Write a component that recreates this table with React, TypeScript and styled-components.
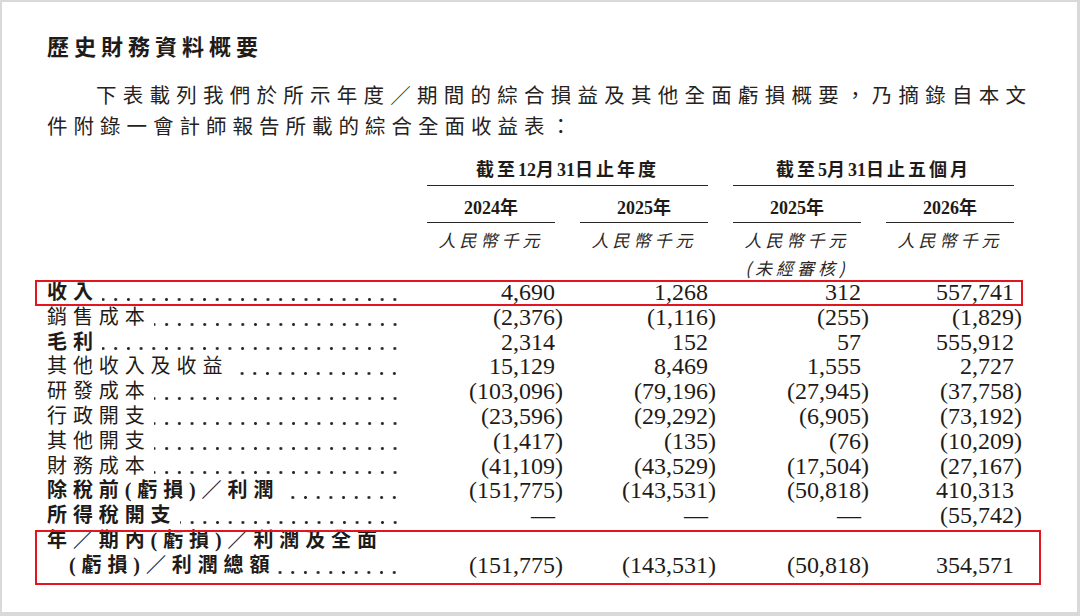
import React from 'react';
import styled, { createGlobalStyle, css } from 'styled-components';

const GlobalStyle = createGlobalStyle`
  html, body { margin: 0; padding: 0; background: #d9d9d9; }
  body { width: 1080px; height: 616px; overflow: hidden; }
`;

const Page = styled.main`
  box-sizing: border-box;
  margin: 2px 3px 0 2px;
  width: 1075px;
  height: 610px;
  background: #ffffff;
  padding: 29px 0 0 45px;
  color: #1e1b18;
  font-family: "Liberation Serif", "Noto Sans CJK TC", serif;
`;

const Title = styled.h1`
  margin: 0;
  font-family: "Noto Sans CJK TC", sans-serif;
  font-size: 22px;
  font-weight: 700;
  letter-spacing: 5px;
  line-height: 28px;
`;

const Intro = styled.p`
  margin: 19.5px 0 0;
  width: 985px;
  font-family: "Noto Sans CJK TC", sans-serif;
  font-size: 20.5px;
  letter-spacing: 6px;
  line-height: 31px;
  text-indent: 49px;
  text-align: justify;
  color: #262220;
`;

const Table = styled.section`
  margin-top: 17.5px;
  display: flex;
  flex-direction: column;
  align-items: flex-start;
`;

const gridCols = css`
  display: grid;
  grid-template-columns: 355px repeat(4, 128px);
  column-gap: 25px;
`;

const HeadRow = styled.div<{ $padTop: number }>`
  ${gridCols};
  padding-top: ${p => p.$padTop}px;
`;

const GroupHead = styled.div<{ $col: number }>`
  grid-column: ${p => p.$col} / span 2;
  text-align: center;
  font-size: 18px;
  font-weight: 700;
  line-height: 24px;
  letter-spacing: 3px;
  padding-bottom: 3px;
  border-bottom: 1px solid #2a2624;
`;

const Digits = styled.span`
  letter-spacing: 0;
`;

const YearHead = styled.div<{ $col: number }>`
  grid-column: ${p => p.$col};
  text-align: center;
  font-size: 18px;
  font-weight: 700;
  line-height: 24px;
  padding-bottom: 2px;
  border-bottom: 1px solid #2a2624;
`;

const UnitCell = styled.div<{ $col: number }>`
  grid-column: ${p => p.$col};
  text-align: center;
  font-family: "Noto Sans CJK TC", sans-serif;
  font-size: 17px;
  font-style: italic;
  letter-spacing: 4px;
  line-height: 24px;
  color: #2b2725;
`;

const Row = styled.div`
  ${gridCols};
  height: 24.8px;
  line-height: 24.8px;
  align-items: center;
`;

const LabelCell = styled.div<{ $bold?: boolean; $indent?: number }>`
  align-self: stretch;
  display: flex;
  align-items: baseline;
  min-width: 0;
  white-space: nowrap;
  font-size: 20px;
  letter-spacing: 5.9px;
  font-weight: ${p => (p.$bold ? 700 : 400)};
  padding-left: ${p => p.$indent ?? 0}px;
`;

const Leader = styled.span`
  flex: 1;
  align-self: stretch;
  margin-left: 3px;
  background-image: radial-gradient(circle, #2a2624 0 1.2px, transparent 1.7px);
  background-size: 12.7px 5px;
  background-repeat: repeat-x;
  background-position: right 1px bottom 3px;
`;

const Num = styled.div`
  text-align: right;
  font-size: 24px;
  white-space: nowrap;
`;

const Close = styled.span`
  margin-right: -8px;
`;

const Marked = styled.div<{ $t: number; $r: number; $b: number; $l: number }>`
  position: relative;
  width: max-content;
  &::after {
    content: '';
    position: absolute;
    top: ${p => p.$t}px;
    right: ${p => p.$r}px;
    bottom: ${p => p.$b}px;
    left: ${p => p.$l}px;
    border: 2px solid #e3151f;
    pointer-events: none;
  }
`;

type Line = { label: string; bold?: boolean; values: string[] };

const lines: Line[] = [
  { label: '銷售成本', values: ['(2,376)', '(1,116)', '(255)', '(1,829)'] },
  { label: '毛利', bold: true, values: ['2,314', '152', '57', '555,912'] },
  { label: '其他收入及收益', values: ['15,129', '8,469', '1,555', '2,727'] },
  { label: '研發成本', values: ['(103,096)', '(79,196)', '(27,945)', '(37,758)'] },
  { label: '行政開支', values: ['(23,596)', '(29,292)', '(6,905)', '(73,192)'] },
  { label: '其他開支', values: ['(1,417)', '(135)', '(76)', '(10,209)'] },
  { label: '財務成本', values: ['(41,109)', '(43,529)', '(17,504)', '(27,167)'] },
  { label: '除稅前(虧損)／利潤', bold: true, values: ['(151,775)', '(143,531)', '(50,818)', '410,313'] },
  { label: '所得稅開支', bold: true, values: ['—', '—', '—', '(55,742)'] },
];

const Value: React.FC<{ v: string }> = ({ v }) =>
  v.endsWith(')') ? (
    <Num>
      {v.slice(0, -1)}
      <Close>)</Close>
    </Num>
  ) : (
    <Num>{v}</Num>
  );

const DataRow: React.FC<Line & { indent?: number }> = ({ label, bold, values, indent }) => (
  <Row>
    <LabelCell $bold={bold} $indent={indent}>
      <span>{label}</span>
      <Leader />
    </LabelCell>
    {values.map((v, i) => (
      <Value key={i} v={v} />
    ))}
  </Row>
);

export default function App() {
  return (
    <>
      <GlobalStyle />
      <Page>
        <Title>歷史財務資料概要</Title>
        <Intro>
          下表載列我們於所示年度／期間的綜合損益及其他全面虧損概要，乃摘錄自本文件附錄一會計師報告所載的綜合全面收益表：
        </Intro>
        <Table>
          <HeadRow $padTop={0}>
            <GroupHead $col={2}>
              截至<Digits>12</Digits>月<Digits>31</Digits>日止年度
            </GroupHead>
            <GroupHead $col={4}>
              截至<Digits>5</Digits>月<Digits>31</Digits>日止五個月
            </GroupHead>
          </HeadRow>
          <HeadRow $padTop={10}>
            <YearHead $col={2}>2024年</YearHead>
            <YearHead $col={3}>2025年</YearHead>
            <YearHead $col={4}>2025年</YearHead>
            <YearHead $col={5}>2026年</YearHead>
          </HeadRow>
          <HeadRow $padTop={5}>
            <UnitCell $col={2}>人民幣千元</UnitCell>
            <UnitCell $col={3}>人民幣千元</UnitCell>
            <UnitCell $col={4}>人民幣千元</UnitCell>
            <UnitCell $col={5}>人民幣千元</UnitCell>
          </HeadRow>
          <HeadRow $padTop={4}>
            <UnitCell $col={4}>(未經審核)</UnitCell>
          </HeadRow>
          <Marked $t={0} $r={-9} $b={-1} $l={-12}>
            <DataRow label="收入" bold values={['4,690', '1,268', '312', '557,741']} />
          </Marked>
          {lines.map(l => (
            <DataRow key={l.label} {...l} />
          ))}
          <Marked $t={2} $r={-27} $b={-7} $l={-12}>
            <Row>
              <LabelCell $bold>
                <span>年／期內(虧損)／利潤及全面</span>
              </LabelCell>
            </Row>
            <DataRow
              label="(虧損)／利潤總額"
              bold
              indent={22}
              values={['(151,775)', '(143,531)', '(50,818)', '354,571']}
            />
          </Marked>
        </Table>
      </Page>
    </>
  );
}
